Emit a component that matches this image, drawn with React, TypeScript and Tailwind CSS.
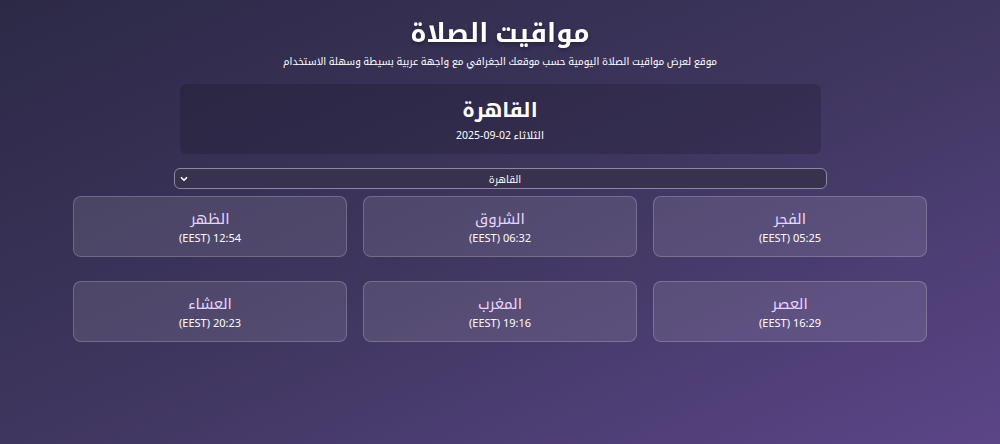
import { ChevronDown } from "lucide-react";

const prayers = [
  { name: "الفجر", time: "05:25" },
  { name: "الشروق", time: "06:32" },
  { name: "الظهر", time: "12:54" },
  { name: "العصر", time: "16:29" },
  { name: "المغرب", time: "19:16" },
  { name: "العشاء", time: "20:23" },
];

export default function App() {
  return (
    <div
      dir="rtl"
      className="min-h-[444px] w-full bg-linear-to-br from-[#2c2946] via-[#3f365f] to-[#5b4588] text-white font-['Noto_Sans','Noto_Kufi_Arabic','Noto_Sans_Arabic','DejaVu_Sans',sans-serif]"
    >
      <div className="mx-auto w-[854px] pt-[13px] pb-8 flex flex-col items-center">
        <h1 className="text-[26px] leading-[38px] font-bold drop-shadow-[0_2px_2px_rgba(0,0,0,0.35)]">
          مواقيت الصلاة
        </h1>
        <p className="text-[10px] leading-[18px] mt-[1px]">
          موقع لعرض مواقيت الصلاة اليومية حسب موقعك الجغرافي مع واجهة عربية بسيطة وسهلة الاستخدام
        </p>

        <div className="mt-[14px] w-[641px] h-[70px] rounded-md bg-black/15 flex flex-col items-center justify-center">
          <div className="text-[20px] leading-[30px] font-bold">القاهرة</div>
          <div className="text-[10.5px] leading-[16px] mt-[2px]">
            الثلاثاء <span dir="ltr">2025-09-02</span>
          </div>
        </div>

        <div className="mt-[14px] w-[653px] h-[21px] rounded-[6px] border border-[#8e879f] bg-[#38324f] flex items-center px-1">
          <span className="flex-1 text-center text-[10px] leading-none">القاهرة</span>
          <ChevronDown className="w-[10px] h-[10px]" strokeWidth={4} />
        </div>

        <div className="mt-[7px] w-full grid grid-cols-3 gap-x-4 gap-y-6">
          {prayers.map((p) => (
            <div
              key={p.name}
              className="h-[61px] rounded-lg border border-white/20 bg-white/10 flex flex-col items-center justify-center"
            >
              <div className="text-[15px] leading-[22px] text-[#e6d6ff]">{p.name}</div>
              <div className="text-[11px] leading-[16px] mt-[1px]">
                {p.time} <span dir="ltr">(EEST)</span>
              </div>
            </div>
          ))}
        </div>
      </div>
    </div>
  );
}
